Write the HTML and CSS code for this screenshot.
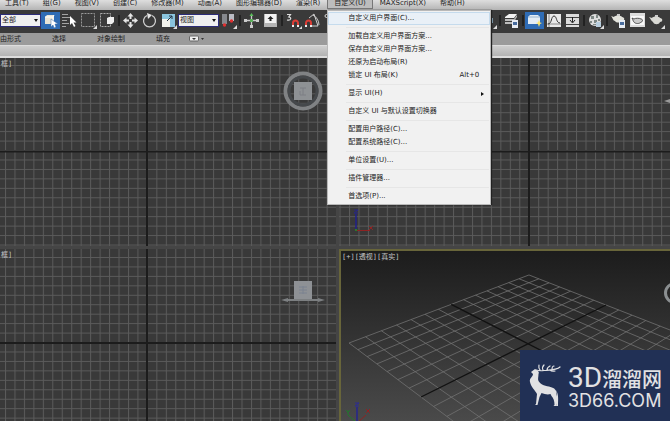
FILE: index.html
```html
<!DOCTYPE html>
<html lang="zh-CN">
<head>
<meta charset="utf-8">
<title>3D</title>
<link rel="stylesheet" href="styles.css">
</head>
<body>
<nav class="menubar">
  <button>工具(T)</button><button>组(G)</button><button>视图(V)</button><button>创建(C)</button><button>修改器(M)</button><button>动画(A)</button><button>图形编辑器(D)</button><button>渲染(R)</button>
  <div class="menu-host">
    <button class="open">自定义(U)</button>
    <div class="menu">
      <button class="hot">自定义用户界面(C)...</button>
      <hr>
      <button>加载自定义用户界面方案...</button>
      <button>保存自定义用户界面方案...</button>
      <button>还原为启动布局(R)</button>
      <button>锁定 UI 布局(K)<span>Alt+0</span></button>
      <hr>
      <button>显示 UI(H)<i class="sub"></i></button>
      <hr>
      <button>自定义 UI 与默认设置切换器</button>
      <hr>
      <button>配置用户路径(C)...</button>
      <button>配置系统路径(C)...</button>
      <hr>
      <button>单位设置(U)...</button>
      <hr>
      <button>插件管理器...</button>
      <hr>
      <button>首选项(P)...</button>
    </div>
  </div>
  <button>MAXScript(X)</button><button>帮助(H)</button>
</nav>

<div class="toolbar">
  <div class="combo"><select aria-label="选择过滤器"><option>全部</option></select></div>
  <button class="tool on" aria-label="选择对象"><svg viewBox="0 0 17 17"><path d="M3 5l2-2h7v7l-1 2H3z" fill="#e9e4d6"/><path d="M3 5h8l1-2M11 5v7" stroke="#fff" fill="none"/><path d="M9 7v8l2-2 1 3 2-1-1-3h3z" fill="#fff" stroke="#3568a8" stroke-width=".5"/></svg></button>
  <button class="tool" aria-label="按名称选择"><svg viewBox="0 0 17 17"><path d="M1 2.500h6M1 5.500h8M1 8.500h5M1 11.500h7M1 14.500h4" stroke="#a4a4a4"/><path d="M9 4v9l2-2 2 4 1.500-1-2-3.500h3z" fill="#fff"/></svg></button>
  <button class="tool" aria-label="矩形选择区域"><svg viewBox="0 0 17 17"><path d="M1.500 1.500h13v13h-13z" fill="none" stroke="#999" stroke-dasharray="2 1"/><path d="M17 13v4h-4z" fill="#ddd"/></svg></button>
  <button class="tool" aria-label="窗口/交叉"><svg viewBox="0 0 17 17"><path d="M1.500 1.500h10v13h-10z" fill="none" stroke="#aaa" stroke-dasharray="2 1"/><path d="M8 6l2-1h5v5l-2 2H8z" fill="#eee"/></svg></button>
  <i class="sep"></i>
  <button class="tool" aria-label="移动"><svg viewBox="0 0 17 17"><path d="M8.500 1l3 3.500h-2V7h-2V4.500h-2zM8.500 16l3-3.500h-2V10h-2v2.500h-2zM1 8.500l3.500-3v2H7v2H4.500v2zM16 8.500l-3.500-3v2H10v2h2.500v2z" fill="#e6e6e6"/></svg></button>
  <button class="tool" aria-label="旋转"><svg viewBox="0 0 17 17"><path d="M6 3.500A6 6 0 1 0 11 3.500" fill="none" stroke="#ccc" stroke-width="1.300"/><path d="M6 1l5 2-4 4z" fill="#e6e6e6"/></svg></button>
  <button class="tool" aria-label="缩放"><svg viewBox="0 0 17 17"><path d="M2 2h13v13H2z" fill="#8ac4dd"/><path d="M2 7h8v8H2z" fill="#f2f2ec"/><path d="M7 9l5-5M9 4h3v3" stroke="#234" fill="none"/><path d="M17 13v4h-4z" fill="#ddd"/></svg></button>
  <div class="combo"><select aria-label="参考坐标系"><option>视图</option></select></div>
  <button class="tool" aria-label="使用轴点中心"><svg viewBox="0 0 17 17"><path d="M2 2h5v10H2z" fill="#85888d"/><path d="M9 2h5v7H9z" fill="#b9bcc4"/><circle cx="4.500" cy="13" r="1.700" fill="#e03030"/><circle cx="11.500" cy="9" r="1.700" fill="#e03030"/><path d="M17 13v4h-4z" fill="#ddd"/></svg></button>
  <i class="sep"></i>
  <button class="tool" aria-label="选择并操纵"><svg viewBox="0 0 17 17"><path d="M8.500 3v12M2 8.500h13" stroke="#ccc" stroke-width="1.300"/><path d="M8.500 1l2 3h-4z" fill="#5bc05b"/><path d="M7 7h3v3H7z" fill="#59ad59"/><path d="M1 7h3v3H1zM13 7h3v3h-3zM7 13h3v3H7z" fill="#ccc"/></svg></button>
  <button class="tool" aria-label="键盘快捷键覆盖切换"><svg viewBox="0 0 17 17"><path d="M2 2h13v13H2z" fill="#b5b5b5"/><path d="M3 2h11v9H3z" fill="#f2f2f2"/><path d="M8.500 4l3 3h-2v2h-2V7h-2z" fill="#222"/></svg></button>
  <i class="sep"></i>
  <button class="tool" aria-label="捕捉开关"><svg viewBox="0 0 17 17"><path d="M2 2.500h3.500L3.800 5c3 0 2.500 4-1.800 3" fill="none" stroke="#ddd" stroke-width="1.200"/><path d="M8 14v-3a2.500 2.500 0 0 1 5 0v3" fill="none" stroke="#dc3d35" stroke-width="2"/><path d="M7 13h2v2H7zM12 13h2v2h-2z" fill="#eee"/><path d="M17 14v3h-3z" fill="#ddd"/></svg></button>
  <button class="tool" aria-label="角度捕捉"><svg viewBox="0 0 17 17"><path d="M5 6l5-4M10 2l4 12H8M9 3a12 12 0 0 1 6 10" fill="none" stroke="#ccc"/><path d="M2 14v-3a2.500 2.500 0 0 1 5 0v3" fill="none" stroke="#dc3d35" stroke-width="2"/><path d="M1 13h2v2H1zM6 13h2v2H6z" fill="#eee"/></svg></button>
  <button class="tool" aria-label="百分比捕捉"><svg viewBox="0 0 17 17"><circle cx="3.500" cy="4" r="1.500" fill="none" stroke="#ddd"/></svg></button>
  <button class="tool push" aria-label="对齐"><svg viewBox="0 0 17 17"><path d="M2 6h11v5H2z" fill="#88a9bc"/><path d="M17 13v4h-4z" fill="#ddd"/></svg></button>
  <i class="sep"></i>
  <button class="tool" aria-label="层管理器"><svg viewBox="0 0 17 17"><path d="M2 5l4-3h8l-3 4H2z" fill="#f2f2f2"/><path d="M2 7h9l3-4v2l-3 4H2zM2 10h9l2-3v2l-2 3H2z" fill="#bbb"/><path d="M9 8h6v8H9z" fill="#e8edf4"/><path d="M10 10h4v3h-4z" fill="#496d9f"/></svg></button>
  <i class="sep"></i>
  <button class="tool on" aria-label="功能区"><svg viewBox="0 0 17 17"><path d="M2 5l2-2h8l2 2v7H2z" fill="#e4edf5"/><path d="M2 5h12" stroke="#9ab5d0"/><path d="M13 8l1 2.500 2 .5-2 1-1 3-1-3-2-1 2-.5z" fill="#ffe66b"/></svg></button>
  <button class="tool" aria-label="曲线编辑器"><svg viewBox="0 0 17 17"><path d="M2 2h14v13H2z" fill="#e9e9e9"/><path d="M4 2v13M2 12h14" stroke="#888"/><path d="M3 12c4 0 3-8 6-8s2 7 6 7" fill="none" stroke="#333"/></svg></button>
  <button class="tool" aria-label="图解视图"><svg viewBox="0 0 17 17"><path d="M2 2h13v13H2z" fill="#ddd"/><path d="M2 5.500h13M2 12.500h13" stroke="#444"/><path d="M8.500 5v5M6 8l2.500 3L11 8" stroke="#222" fill="none"/></svg></button>
  <i class="sep"></i>
  <button class="tool" aria-label="材质编辑器"><svg viewBox="0 0 17 17"><circle cx="8" cy="8" r="6" fill="#ddd"/><path d="M4 4h3v3H4zM9 3h2v3H9zM3 9h2v2H3zM7 8h3v3H7zM11 7h2v2h-2zM6 12h3v1H6z" fill="#7e8885"/><path d="M9 10h5v5H9z" fill="#b8cede"/><path d="M17 13v4h-4z" fill="#ddd"/></svg></button>
  <i class="sep"></i>
  <button class="tool" aria-label="渲染设置"><svg viewBox="0 0 17 17"><path d="M1 4l3 1c1-2 7-2 8 0 3 0 3 4 0 4-1 2-6 2-7 0C3 9 3 6 1 4z" fill="#e3e3dc"/><path d="M7 2h3v2H7z" fill="#ccc"/><path d="M9 8h6v8H9z" fill="#e8edf4"/><path d="M10 10h4v3h-4z" fill="#496d9f"/></svg></button>
  <button class="tool" aria-label="渲染帧窗口"><svg viewBox="0 0 17 17"><path d="M1 1h15v14H1z" fill="#ddd"/><path d="M2 4h13v9H2z" fill="#f8f8f8"/><path d="M3 6l2 1c1-1 6-1 7 0 2 0 2 3 0 3-1 2-6 2-7 0-1-1-1-2-2-4z" fill="#ccc" stroke="#333" stroke-width=".8"/></svg></button>
  <button class="tool" aria-label="渲染产品"><svg viewBox="0 0 17 17"><path d="M1 5l3 1c1-2 7-2 8 0 3 0 3 4 0 4-1 3-6 3-7 0C3 9 3 7 1 5z" fill="#d9d9d4"/><path d="M7 3h3v2H7z" fill="#ccc"/><path d="M17 13v4h-4z" fill="#ddd"/></svg></button>
</div>

<div class="tabs">
  <button>由形式</button><button>选择</button><button>对象绘制</button><button>填充</button>
  <button class="pill" aria-label="最小化"><svg viewBox="0 0 16 8" width="16" height="8"><rect x=".5" y="1" width="9" height="5" rx="1" fill="#eee" stroke="#666"/><path d="M3 3h4L5 5zM12 3h3l-1.500 2z" fill="#333"/></svg></button>
</div>
<div class="strip"></div>

<main class="views">
  <section class="view">
    <svg class="fill">
      <defs>
        <pattern id="top" x="5" y="7" width="9.460" height="9.450" patternUnits="userSpaceOnUse"><path d="M.5 0v10M0 .5h10" stroke="#5b5b5b"/></pattern>
        <pattern id="low" x="5" y="8" width="9.460" height="9.450" patternUnits="userSpaceOnUse"><path d="M.5 0v10M0 .5h10" stroke="#5b5b5b"/></pattern>
        <pattern id="side" x="10" y="7" width="9.460" height="9.450" patternUnits="userSpaceOnUse"><path d="M.5 0v10M0 .5h10" stroke="#5b5b5b"/></pattern>
      </defs>
      <rect width="100%" height="100%" fill="url(#top)"/>
      <path d="M147 0v600M0 93.500h2000" stroke="#1c1c1c" stroke-width="2"/>
    </svg>
    <span class="tag">框]</span>
    <svg class="cube" viewBox="0 0 50 50"><circle cx="25" cy="25" r="17.500" fill="none" stroke="#808284" stroke-width="4"/><circle cx="25" cy="25" r="14" fill="none" stroke="#45484b" stroke-width="3"/><path d="M16 16h18v18H16z" fill="#8e9194"/><path d="M22 22h6M25 22v7M22 29h6M22 25v4" stroke="#7c7f84"/></svg>
  </section>
  <section class="view">
    <svg class="fill">
      <rect width="100%" height="100%" fill="url(#side)"/>
      <path d="M190 0v600M0 93.500h2000" stroke="#1c1c1c" stroke-width="2"/>
      <path d="M17 156v17" stroke="#20208c" stroke-width="1.500"/><path d="M15 152h4l-4 3h4" stroke="#25258c" fill="none"/><path d="M18 172.500h13" stroke="#8e2323"/><path d="M30 168l4 4M34 168l-4 4" stroke="#8e2323"/><path d="M16 171h2v2h-2z" fill="#2c7a2c"/>
    </svg>
    <svg class="edge low-edge" viewBox="0 0 6 40"><path d="M0 20l6-2v4z" fill="#999"/></svg>
  </section>
  <section class="view">
    <svg class="fill">
      <rect width="100%" height="100%" fill="url(#low)"/>
      <path d="M147 0v600M0 94h2000" stroke="#1c1c1c" stroke-width="2"/>
    </svg>
    <span class="tag">框]</span>
    <svg class="cube" viewBox="0 0 50 50"><path d="M3 43l7-2v1h30v-1l7 2-7 2v-1H10v1z" fill="#7c7f81"/><path d="M16 24h18v18H16z" fill="#8e9195"/><path d="M21 30h8M21 33h8M21 36h8M25 29v8" stroke="#7b8290"/></svg>
  </section>
  <section class="view persp">
    <svg class="fill" id="floor">
      <path d="M16 156v17" stroke="#24248f" stroke-width="1.500"/><path d="M14 152h4l-4 3h4" stroke="#2a2a99" fill="none"/><path d="M16 172l9-8M25 158l4 4M29 158l-4 4" stroke="#8e2323"/><path d="M16 172l-9-8M5 159l2 2 2-2M7 161v3" stroke="#1e7a2a" fill="none"/>
    </svg>
    <span class="tag">[+][透视][真实]</span>
    <svg class="edge" viewBox="0 0 6 40"><circle cx="11" cy="20" r="9.500" fill="none" stroke="#8b8f91" stroke-width="3"/></svg>
  </section>
</main>

<a class="brand" href="#" aria-label="3D66">
  <svg viewBox="0 0 32 44"><g fill="#e1e1e3"><path d="M2 8l4-3 3 2c1 1 1 2 .500 3 0 3-1 5 0 7 2 4 8 5 12 6 4 1 6 3 6 7 1 4 1 8 0 12h-3l1-1c0-4-1-7-3-9l-1-2c-3 1-6 0-9-1l-2 4-2 8H6l1-1 1-10c-2-4-6-7-7-12-1-4 3-5 3-8z"/><path d="M27 26c3 5 2 10 2 16h-2l1-2V30z"/></g><path d="M7 6C10 7 12 7 15 6.500 22 6 28 6 31 3M11 6C9 4 10 2 10 1M14 6c-1-2 0-4 1-5M18 6c0-2 1-3 3-4M23 5c0-2 1-3 2-3M21 6c2 2 4 1 5 1" fill="none" stroke="#e1e1e3" stroke-width="1.200" stroke-linecap="round"/></svg>
  <span class="words"><strong>3D<b>溜溜网</b></strong><em>3D66.COM</em></span>
</a>
<script src="floor.js"></script>
</body>
</html>
```
FILE: styles.css
```css
* { box-sizing: border-box; }
body {
  margin: 0;
  height: 100vh;
  display: flex;
  flex-direction: column;
  overflow: hidden;
  background: #3b3b3b;
  color: #222;
  font: 7px/13px "DejaVu Sans", "Noto Sans CJK SC", sans-serif;
}
button, select {
  margin: 0;
  padding: 0;
  border: 0;
  background: none;
  color: inherit;
  font: inherit;
  white-space: nowrap;
}
.menubar {
  flex: none;
  display: flex;
  gap: 14px;
  height: 10px;
  padding-left: 5px;
  background: linear-gradient(#dedede, #b4b4b4);
}
.menubar > button, .open { height: 9px; line-height: 7px; padding-bottom: 2px; }
.menu-host { position: relative; margin: 0 -7px; }
.open {
  display: block;
  padding: 0 6px 2px;
  border: 1px solid #777;
  border-top: 0;
  background: #bdbdbd;
}
.menu {
  position: absolute;
  z-index: 5;
  top: 10px;
  left: 0;
  width: 164px;
  padding: 1px 0;
  border: 1px solid #b9b9b9;
  background: #f1f1f1;
  box-shadow: 1px 0 1px #222;
}
.menu button {
  display: flex;
  align-items: center;
  width: 100%;
  height: 13px;
  padding: 0 11px 0 20px;
}
.menu span { margin-left: auto; }
.menu .hot { background: #e9f0f7; box-shadow: inset 0 0 0 1px #c5dbed; }
.menu hr { height: 1px; margin: 2px 1px 2px 18px; border: 0; background: #e6e6e6; }
.sub {
  margin-left: auto;
  margin-right: -5px;
  border: 2px solid transparent;
  border-left: 3px solid #111;
  border-right: 0;
}
.toolbar {
  flex: none;
  display: flex;
  align-items: center;
  height: 23px;
  padding: 0 4px 2px 0;
  background: #3a3a3a;
}
.combo { position: relative; flex: none; width: 41px; height: 13px; }
.combo select {
  appearance: none;
  width: 100%;
  height: 100%;
  padding-left: 1px;
  border: 1px solid #2c2c78;
  background: #f0f0f0;
  line-height: 11px;
}
.combo::after {
  content: "";
  position: absolute;
  right: 3px;
  top: 5px;
  border: 2px solid transparent;
  border-top: 3px solid #111;
  border-bottom: 0;
}
.tool { flex: none; width: 19px; height: 17px; padding: 0 1px; }
.tool svg { display: block; width: 17px; height: 17px; }
.on { background: #2f6cb5; }
.push { margin-left: auto; }
.sep { flex: none; width: 2px; height: 11px; margin: 0 1px; background: #222; }
.tabs {
  flex: none;
  display: flex;
  gap: 31px;
  height: 12px;
  background: #9b9b9b;
  line-height: 13px;
}
.pill { margin-left: -12px; }
.pill svg { display: block; }
.strip {
  flex: none;
  height: 13px;
  border-top: 1px solid #ddd;
  border-bottom: 2px solid #dcdcdc;
  background: linear-gradient(#cfcfcf, #b3b3b3);
}
.views {
  flex: 1;
  display: grid;
  grid-template-columns: 336fr 331fr;
  grid-template-rows: 188fr 172fr;
  gap: 3px;
  background: #454545;
  min-height: 0;
}
.view { position: relative; overflow: hidden; background: #393939; }
.fill { position: absolute; inset: 0; width: 100%; height: 100%; }
.persp {
  border: 2px solid #68653a;
  border-right: 0;
  border-bottom: 0;
  background: linear-gradient(#1c1c1c, #4a4a4a);
}
.tag {
  position: relative;
  display: block;
  padding-left: 1px;
  color: #c4c4c4;
  font-family: "DejaVu Sans Mono", "Noto Sans CJK SC", monospace;
}
.cube { position: absolute; right: 8px; top: 8px; width: 50px; height: 50px; }
.edge { position: absolute; right: 0; top: 22px; width: 6px; height: 40px; }
.low-edge { top: 23px; }
.brand {
  position: absolute;
  right: 0;
  bottom: 0;
  display: flex;
  gap: 7px;
  width: 150px;
  height: 71px;
  padding: 14px 9px;
  background: #213055;
  color: #e1e1e3;
  text-decoration: none;
}
.brand svg { flex: none; width: 32px; height: 44px; }
.words { padding-top: 1px; white-space: nowrap; }
.words strong { display: block; font: 400 28px/26px Roboto, sans-serif; }
.words b { font: 500 20px/26px "Noto Sans CJK SC", sans-serif; }
.words em { display: block; font: 400 18px/18px Inter, sans-serif; }
```
FILE: floor.js
```js
// Draws the ground plane: 14 x 14 cells projected in perspective.
const svg = document.getElementById("floor");
const cells = 14;

function project(s, t) {
  const w = 1 + 0.315 * s - 0.158 * t;
  return [
    (349 + 346.6 * s + 5.5 * t) / w - 341,
    (343 + 18.6 * s - 8.7 * t) / w - 251
  ];
}

function line(a, b, dark) {
  const el = document.createElementNS("http://www.w3.org/2000/svg", "line");
  el.setAttribute("x1", a[0]);
  el.setAttribute("y1", a[1]);
  el.setAttribute("x2", b[0]);
  el.setAttribute("y2", b[1]);
  el.setAttribute("stroke", dark ? "#111" : "#717171");
  el.setAttribute("stroke-width", dark ? 1.3 : 0.8);
  svg.append(el);
}

for (const dark of [false, true]) {
  for (let i = 0; i <= cells; i++) {
    if ((i === cells / 2) !== dark) continue;
    const k = i / cells;
    line(project(k, 0), project(k, 2), dark);
    line(project(0, 2 * k), project(1, 2 * k), dark);
  }
}
```
